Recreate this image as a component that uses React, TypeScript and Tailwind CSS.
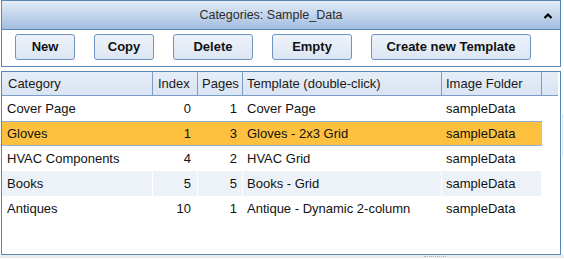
import React from "react";

const rows = [
  { cat: "Cover Page", idx: "0", pages: "1", tpl: "Cover Page", folder: "sampleData", kind: "plain" },
  { cat: "Gloves", idx: "1", pages: "3", tpl: "Gloves - 2x3 Grid", folder: "sampleData", kind: "sel" },
  { cat: "HVAC Components", idx: "4", pages: "2", tpl: "HVAC Grid", folder: "sampleData", kind: "plain" },
  { cat: "Books", idx: "5", pages: "5", tpl: "Books - Grid", folder: "sampleData", kind: "alt" },
  { cat: "Antiques", idx: "10", pages: "1", tpl: "Antique - Dynamic 2-column", folder: "sampleData", kind: "plain" },
];

function Btn({ w, children }: { w: string; children: React.ReactNode }) {
  return (
    <div
      className={`${w} h-[26px] flex items-center justify-center border border-[#6f93c2] rounded-[3px] bg-gradient-to-b from-[#eef3fa] to-[#dce6f3] text-[13px] font-bold text-[#111]`}
    >
      {children}
    </div>
  );
}

export default function App() {
  return (
    <div className="w-[564px] h-[259px] bg-white font-['Liberation_Sans',Arial,sans-serif] relative overflow-hidden">
      {/* Top panel */}
      <div className="ml-[1px] w-[560px] border border-[#5a86b6]">
        <div className="h-[29px] border-b border-[#5a86b6] bg-gradient-to-b from-[#e4ecf7] to-[#a2bde0] flex items-center relative">
          <div className="flex-1 text-center pr-[20px] text-[12.5px] text-[#2b2b2b]">Categories: Sample_Data</div>
          <svg className="absolute right-[7px] top-[11px]" width="10" height="8" viewBox="0 0 10 8">
            <polyline points="1.5,6 5,2.5 8.5,6" fill="none" stroke="#000" strokeWidth="2.2" />
          </svg>
        </div>
        <div className="h-[36px] bg-white flex gap-[19px] pl-[13px] pt-[4px]">
          <Btn w="w-[60px]">New</Btn>
          <Btn w="w-[60px]">Copy</Btn>
          <Btn w="w-[80px]">Delete</Btn>
          <Btn w="w-[80px]">Empty</Btn>
          <Btn w="w-[160px]">Create new Template</Btn>
        </div>
      </div>

      {/* Grid panel */}
      <div className="mt-[4px] ml-[1px] w-[560px] h-[184px] border border-[#5a86b6] bg-white">
        <div className="w-[556px] h-[24px] flex bg-gradient-to-b from-[#e6edf7] to-[#d9e4f2] border-b border-[#7e9dc6] text-[13px] text-[#1a1a1a]">
          <div className="w-[151px] border-r border-[#7e9dc6] pl-[6px] flex items-center">Category</div>
          <div className="w-[45px] border-r border-[#7e9dc6] pl-[5px] flex items-center">Index</div>
          <div className="w-[45px] border-r border-[#7e9dc6] pl-[4px] flex items-center">Pages</div>
          <div className="w-[199px] border-r border-[#7e9dc6] pl-[4px] flex items-center">Template (double-click)</div>
          <div className="w-[100px] border-r border-[#7e9dc6] pl-[4px] flex items-center">Image Folder</div>
          <div className="flex-1" />
        </div>
        {rows.map((r) => {
          const bg =
            r.kind === "sel"
              ? "bg-[#fdc13f] border-y border-[#93acd0]"
              : r.kind === "alt"
              ? "bg-[#edf1f8]"
              : "bg-white";
          const sep = r.kind === "sel" ? "border-[#fdc13f]" : "border-white";
          return (
            <div key={r.cat} className={`w-[540px] h-[25px] flex text-[13px] text-[#111] ${bg}`}>
              <div className={`w-[151px] border-r ${sep} pl-[5px] flex items-center`}>{r.cat}</div>
              <div className={`w-[45px] border-r ${sep} pr-[6px] flex items-center justify-end`}>{r.idx}</div>
              <div className={`w-[45px] border-r ${sep} pr-[5px] flex items-center justify-end`}>{r.pages}</div>
              <div className={`w-[199px] border-r ${sep} pl-[4px] flex items-center`}>{r.tpl}</div>
              <div className={`w-[100px] border-r ${sep} pl-[4px] flex items-center`}>{r.folder}</div>
            </div>
          );
        })}
      </div>

      {/* bottom gray strip */}
      <div className="h-[3px] bg-[#ebebeb] flex">
        <div className="ml-[424px] mt-[1px] w-[22px] h-[1px] border-t border-dotted border-[#9dbbe0]" />
      </div>
      <div className="absolute left-[562px] top-[115px] w-[1px] h-[40px] border-l border-dotted border-[#b9c9dc]" />
    </div>
  );
}
